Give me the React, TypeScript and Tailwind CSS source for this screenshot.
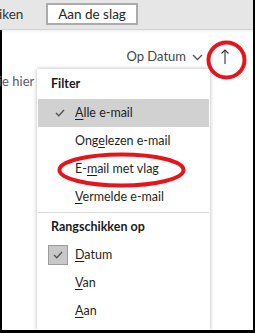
import React from "react";

const font = { fontFamily: 'Lato, "Noto Sans", sans-serif' };

function U({ c }: { c: string }) {
  return <span className="underline underline-offset-2 decoration-1">{c}</span>;
}

function Check() {
  return (
    <svg width="10" height="8" viewBox="0 0 10 8">
      <polyline points="1,4 3.8,6.8 9,1" fill="none" stroke="#555" strokeWidth="1.4" />
    </svg>
  );
}

export default function App() {
  return (
    <div
      className="w-[255px] h-[333px] relative overflow-hidden bg-white border-r-[2px] border-b-[3px] border-black flex flex-col text-[12.5px] text-[#1f1f1f]"
      style={font}
    >
      <div className="h-[30px] shrink-0 bg-[#e6e6e6] border-b border-[#d4d4d4] flex items-center text-[13.5px]">
        <span className="ml-[-1px] w-[47px] text-[#333]">iken</span>
        <div className="w-[92px] h-[22px] mt-[-1px] bg-white border-2 border-[#ababab] flex items-center justify-center text-[#262626]">
          Aan de slag
        </div>
      </div>
      <div className="flex-1 border-l-2 border-black flex flex-col">
        <div className="h-[3px] bg-gradient-to-b from-[#f0f0f0] to-white" />
        <div className="h-[22px] mt-[13px] flex items-center justify-end pr-[23px] text-[#444] text-[13px]">
          <span>Op Datum</span>
          <svg width="11" height="7" viewBox="0 0 11 7" className="ml-[6px] mt-[1px]">
            <polyline points="1,1 5.5,5.5 10,1" fill="none" stroke="#555" strokeWidth="1.3" />
          </svg>
          <svg width="10" height="16" viewBox="0 0 10 16" className="ml-[17px]">
            <line x1="5" y1="1" x2="5" y2="15" stroke="#333" strokeWidth="1.1" />
            <polyline points="1.5,4.5 5,1 8.5,4.5" fill="none" stroke="#333" strokeWidth="1.1" />
          </svg>
        </div>
        <div className="mt-[4px] ml-[-3px] text-[#5d5670] text-[13px]">ie hier</div>
      </div>

      {/* dropdown menu */}
      <div className="absolute left-[37px] top-[69px] w-[173px] bottom-0 bg-white shadow-[0_0_4px_rgba(0,0,0,0.3)] flex flex-col">
        <div className="h-[29px] flex items-center pl-[14px] font-bold text-[#1a1a1a] mt-[1px]">Filter</div>
        <div className="h-[28px] mx-[1px] bg-[#d1d1d1] flex items-center">
          <span className="w-[37px] pl-[17px] flex items-center"><Check /></span>
          <span><U c="A" />lle e-mail</span>
        </div>
        <div className="h-[28px] flex items-center pl-[38px]">
          <span>Ong<U c="e" />lezen e-mail</span>
        </div>
        <div className="h-[28px] flex items-center pl-[38px]">
          <span>E-<U c="m" />ail met vlag</span>
        </div>
        <div className="h-[28px] flex items-center pl-[38px]">
          <span><U c="V" />ermelde e-mail</span>
        </div>
        <div className="h-px mx-[1px] bg-[#d9d9d9] mt-[1px]" />
        <div className="h-[28px] flex items-center pl-[14px] font-bold text-[#1a1a1a]">Rangschikken op</div>
        <div className="h-[28px] flex items-center">
          <span className="ml-[11px] w-[20px] h-[20px] bg-[#c8c8c8] border border-[#9c9c9c] flex items-center justify-center mr-[7px]">
            <Check />
          </span>
          <span><U c="D" />atum</span>
        </div>
        <div className="h-[28px] flex items-center pl-[38px]">
          <span><U c="V" />an</span>
        </div>
        <div className="h-[28px] flex items-center pl-[38px]">
          <span><U c="A" />an</span>
        </div>
      </div>

      {/* red annotations */}
      <svg className="absolute left-0 top-0 pointer-events-none" width="255" height="333">
        <ellipse cx="226.5" cy="60" rx="18" ry="17.5" fill="none" stroke="#e8141c" strokeWidth="4" />
        <ellipse cx="121.5" cy="170" rx="62" ry="15.5" fill="none" stroke="#e8141c" strokeWidth="4" />
      </svg>
    </div>
  );
}
